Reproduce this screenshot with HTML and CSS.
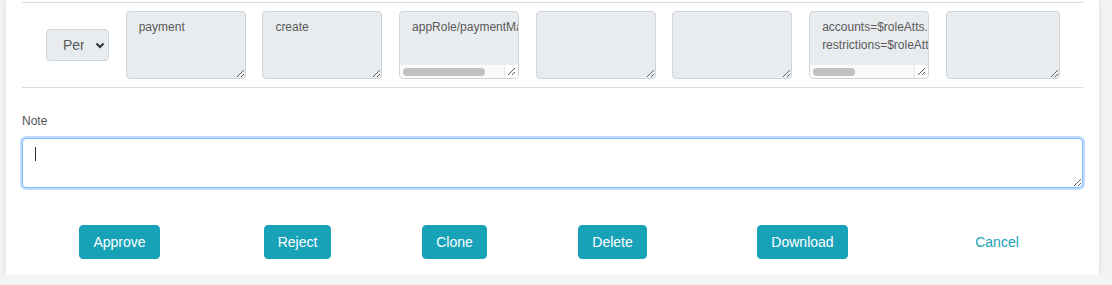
FILE: index.html
```html
<!DOCTYPE html>
<html lang="en">
<head>
    <meta charset="UTF-8">
    <meta name="viewport" content="width=device-width, initial-scale=1.0">
    <title>Role request</title>
    <link rel="stylesheet" href="styles.css">
</head>
<body>
    <div class="card">
        <div class="perm-row">
            <div class="select-wrap">
                <select class="field type-select" disabled>
                    <option>Permission</option>
                </select>
                <svg class="chevron" width="10" height="7" viewBox="0 0 10 7">
                    <path d="M1.5 1.5 L5 5 L8.5 1.5" fill="none" stroke="#333" stroke-width="2"/>
                </svg>
            </div>
            <textarea class="field cell" readonly>payment</textarea>
            <textarea class="field cell" readonly>create</textarea>
            <div class="cell-wrap">
                <textarea class="field cell scroll" wrap="off" readonly>appRole/paymentManager</textarea>
                <div class="hscroll">
                    <div class="track"><div class="thumb" style="width: 82px"></div></div>
                    <div class="corner">
                        <svg width="9" height="9" viewBox="0 0 9 9">
                            <path d="M1 8 L8 1 M5 8 L8 5" stroke="#555" stroke-width="1"/>
                        </svg>
                    </div>
                </div>
            </div>
            <textarea class="field cell" readonly></textarea>
            <textarea class="field cell" readonly></textarea>
            <div class="cell-wrap">
                <textarea class="field cell scroll" wrap="off" readonly>accounts=$roleAtts.accounts;approvals=$roleAtts.approvals;limits=$roleAtts.limits
restrictions=$roleAtts.restrictions</textarea>
                <div class="hscroll">
                    <div class="track"><div class="thumb" style="width: 42px"></div></div>
                    <div class="corner">
                        <svg width="9" height="9" viewBox="0 0 9 9">
                            <path d="M1 8 L8 1 M5 8 L8 5" stroke="#555" stroke-width="1"/>
                        </svg>
                    </div>
                </div>
            </div>
            <textarea class="field cell last" readonly></textarea>
        </div>

        <label class="note-label" for="note">Note</label>
        <div class="note-wrap">
            <textarea id="note" class="note"></textarea>
            <span class="caret"></span>
        </div>

        <div class="actions">
            <div class="action"><button class="btn">Approve</button></div>
            <div class="action"><button class="btn">Reject</button></div>
            <div class="action"><button class="btn">Clone</button></div>
            <div class="action"><button class="btn">Delete</button></div>
            <div class="action"><button class="btn">Download</button></div>
            <div class="action"><a class="link" href="#">Cancel</a></div>
        </div>
    </div>
</body>
</html>
```

FILE: styles.css
```css
body {
    margin: 0;
    padding: 0 13px 0 6px;
    background-color: #f4f4f4;
    font-family: "Liberation Sans", Helvetica, Arial, sans-serif;
    color: #555;
}
.card {
    background-color: #fff;
    box-shadow: 0 1px 6px rgba(0, 0, 0, 0.12);
    padding: 2px 16px 16px;
    height: 257px;
}
.perm-row {
    display: grid;
    grid-template-columns: 63px repeat(6, 120px) 114px;
    column-gap: 16.7px;
    align-items: center;
    padding: 8px 0 8px 24px;
    border-top: 1px solid #dcdcdc;
    border-bottom: 1px solid #dcdcdc;
}
.field {
    box-sizing: border-box;
    background-color: #e9ecef;
    border: 1px solid #ced4da;
    border-radius: 4px;
    font-family: inherit;
    font-size: 12px;
    line-height: 18px;
    color: #5a5a5a;
    outline: none;
}
.select-wrap {
    position: relative;
}
.type-select {
    -webkit-appearance: none;
    appearance: none;
    width: 63px;
    height: 32px;
    padding: 0 24px 0 16px;
    font-size: 14px;
    opacity: 1;
}
.chevron {
    position: absolute;
    right: 4px;
    top: 13px;
}
.cell {
    width: 120px;
    height: 68px;
    padding: 6px 12px;
    resize: both;
    display: block;
}
.cell.last {
    width: 114px;
}
.cell.scroll {
    overflow: hidden;
    white-space: pre;
}
.cell-wrap {
    position: relative;
}
.hscroll {
    position: absolute;
    left: 1px;
    right: 1px;
    bottom: 1px;
    height: 14px;
    display: flex;
    border-radius: 0 0 3px 3px;
    overflow: hidden;
}
.track {
    flex: 1;
    background-color: #fafafa;
    border-top: 1px solid #ededed;
    padding: 3px 0 0 3px;
}
.thumb {
    height: 8px;
    border-radius: 4px;
    background-color: #c1c1c1;
}
.corner {
    width: 14px;
    background-color: #fff;
    border-left: 1px solid #e6e6e6;
    border-top: 1px solid #ededed;
    display: flex;
    align-items: flex-end;
    justify-content: flex-end;
    padding: 0 2px 2px 0;
    box-sizing: border-box;
}
.note-label {
    display: block;
    margin-top: 24px;
    font-size: 12px;
    line-height: 18px;
}
.note-wrap {
    position: relative;
    margin-top: 8px;
}
.note {
    display: block;
    box-sizing: border-box;
    width: 100%;
    height: 50px;
    padding: 8px 12px;
    border: 1px solid #80bdff;
    border-radius: 4px;
    box-shadow: 0 0 0 2px #bfdcfd;
    font-family: inherit;
    font-size: 14px;
    color: #333;
    outline: none;
    resize: vertical;
}
.caret {
    position: absolute;
    left: 13px;
    top: 9px;
    width: 1px;
    height: 14px;
    background-color: #333;
}
.actions {
    display: grid;
    grid-template-columns: 195px 161px 153px 163px 217px 1fr;
    align-items: center;
    justify-items: center;
    margin-top: 37px;
}
.btn {
    background-color: #17a2b8;
    color: #fff;
    border: 1px solid #17a2b8;
    border-radius: 4px;
    padding: 6px 13px;
    font-family: inherit;
    font-size: 14px;
    line-height: 20px;
    cursor: pointer;
}
.link {
    color: #17a2b8;
    text-decoration: none;
    font-size: 14px;
}
```
